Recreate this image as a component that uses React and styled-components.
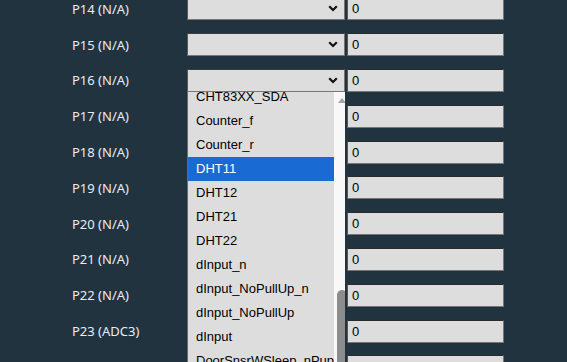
import React from 'react'
import styled, { createGlobalStyle } from 'styled-components'

const GlobalStyle = createGlobalStyle`
  html, body {
    margin: 0;
    padding: 0;
    background: #223340;
    overflow: hidden;
  }
`

const pins = [
  'P14 (N/A)', 'P15 (N/A)', 'P16 (N/A)', 'P17 (N/A)', 'P18 (N/A)', 'P19 (N/A)',
  'P20 (N/A)', 'P21 (N/A)', 'P22 (N/A)', 'P23 (ADC3)', 'P24 (PWM4)'
]

const options = [
  'CHT83XX_SDA', 'Counter_f', 'Counter_r', 'DHT11', 'DHT12', 'DHT21', 'DHT22',
  'dInput_n', 'dInput_NoPullUp_n', 'dInput_NoPullUp', 'dInput', 'DoorSnsrWSleep_nPup'
]

const Chevron = () => (
  <svg width="10" height="7" viewBox="0 0 10 7">
    <path d="M1.2 1.3 L5 5 L8.8 1.3" fill="none" stroke="#111" strokeWidth="2.2" />
  </svg>
)

const App = () => {
  return <Page>
    <GlobalStyle />
    {pins.map((p, i) => (
      <Row key={p}>
        <Label>{p}</Label>
        <SelectCell>
          <Select>
            <Chevron />
          </Select>
          {i === 2 && <Dropdown>
            <Options>
              {options.map(o => (
                <Option key={o} active={o === 'DHT11'}>{o}</Option>
              ))}
            </Options>
            <Scrollbar>
              <UpArrow />
              <Thumb />
            </Scrollbar>
          </Dropdown>}
        </SelectCell>
        <Input>0</Input>
      </Row>
    ))}
  </Page>
}

export default App

const Page = styled.div`
  margin-top: -9px;
  display: flex;
  flex-direction: column;
  font-family: "Liberation Sans", Arial, sans-serif;
`

const Row = styled.div`
  height: 35.8px;
  display: grid;
  grid-template-columns: 113px 158px 157px;
  column-gap: 2px;
  align-items: center;
  padding-left: 72px;
`

const Label = styled.div`
  font-family: "Noto Sans", "Open Sans", sans-serif;
  font-size: 13px;
  color: #e8edf2;
  white-space: nowrap;
`

const SelectCell = styled.div`
  position: relative;
  height: 23px;
`

const Select = styled.div`
  box-sizing: border-box;
  height: 23px;
  background: #dddddd;
  border: 1px solid #767676;
  border-top-color: #3a3a3a;
  border-left-color: #5a5a5a;
  display: flex;
  align-items: center;
  justify-content: flex-end;
  padding-right: 6px;
`

const Input = styled.div`
  box-sizing: border-box;
  height: 23px;
  background: #dddddd;
  border: 1px solid #767676;
  border-top-color: #2a2a2a;
  border-left-color: #555;
  display: flex;
  align-items: center;
  padding-left: 4px;
  font-size: 13px;
  color: #000;
`

const Dropdown = styled.div`
  position: absolute;
  top: 23px;
  left: 0;
  width: 158px;
  height: 290px;
  box-sizing: border-box;
  border-left: 1px solid #6a6a6a;
  background: #dddddd;
  display: flex;
  overflow: hidden;
  z-index: 5;
`

const Options = styled.div`
  flex: 1;
  margin-top: -7px;
  display: flex;
  flex-direction: column;
`

const Option = styled.div`
  height: 24px;
  flex-shrink: 0;
  display: flex;
  align-items: center;
  padding-left: 8px;
  font-size: 13px;
  white-space: nowrap;
  overflow: hidden;
  color: ${p => p.active ? '#ffffff' : '#000000'};
  background: ${p => p.active ? '#1a6ad4' : 'transparent'};
`

const Scrollbar = styled.div`
  width: 16px;
  flex-shrink: 0;
  background: #f8f8f8;
  position: relative;
`

const UpArrow = styled.div`
  position: absolute;
  top: 6px;
  left: 4px;
  width: 0;
  height: 0;
  border-left: 4px solid transparent;
  border-right: 4px solid transparent;
  border-bottom: 5px solid #a3a3a3;
`

const Thumb = styled.div`
  position: absolute;
  top: 198px;
  left: 3px;
  width: 10px;
  height: 200px;
  border-radius: 5px;
  background: #8c8c8c;
`
